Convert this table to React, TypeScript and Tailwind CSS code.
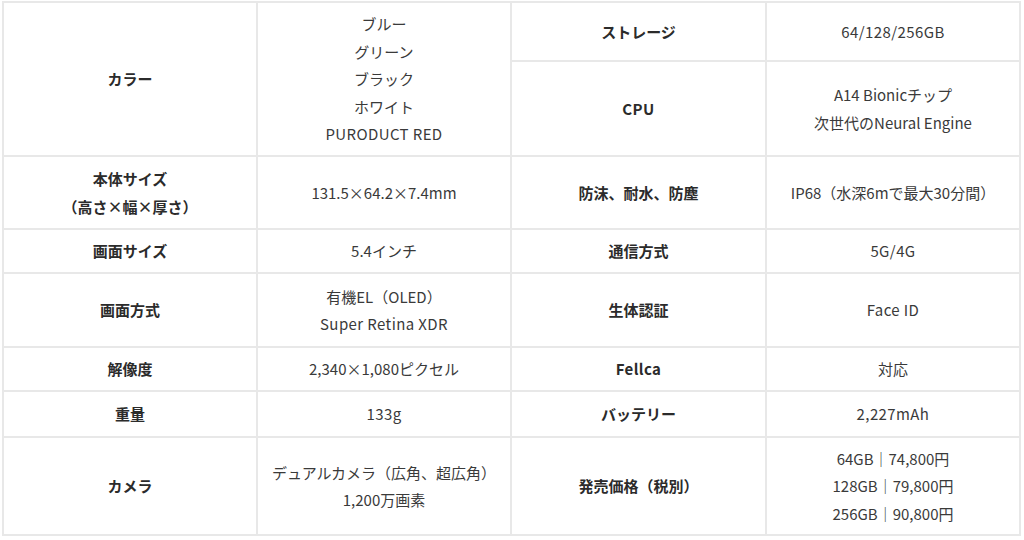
import React from "react";

type Cell = { lines: string[]; head?: boolean; rowSpan?: string };

// latin-only lines render a touch wider in the original
const isLatin = (s: string) => /^[\x20-\x7E]+$/.test(s);

function SpecCell({ lines, head, rowSpan }: Cell) {
  return (
    <div
      className={`flex flex-col items-center justify-center bg-white text-center text-[15px] leading-[27.5px] ${
        head ? "font-bold text-[#2b2b2b]" : "text-[#3a3a3a]"
      } ${rowSpan ?? ""}`}
    >
      {lines.map((l, i) => (
        <span
          key={i}
          className={`whitespace-nowrap ${isLatin(l) ? "tracking-[0.4px]" : ""}`}
        >
          {l}
        </span>
      ))}
    </div>
  );
}

export default function App() {
  return (
    <div
      className="h-[540px] w-[1024px] bg-white pt-[1px] pl-[2px]"
      style={{ fontFamily: '"Noto Sans CJK JP", "Noto Sans", sans-serif' }}
    >
      <div className="grid w-[1019px] grid-cols-[252px_252px_253px_252px] grid-rows-[57px_93px_71px_42px_72px_42px_44px_96px] gap-[2px] border-2 border-[#e8e8e8] bg-[#e8e8e8]">
        <SpecCell head lines={["カラー"]} rowSpan="row-span-2" />
        <SpecCell
          lines={["ブルー", "グリーン", "ブラック", "ホワイト", "PURODUCT RED"]}
          rowSpan="row-span-2"
        />
        <SpecCell head lines={["ストレージ"]} />
        <SpecCell lines={["64/128/256GB"]} />
        <SpecCell head lines={["CPU"]} />
        <SpecCell lines={["A14 Bionicチップ", "次世代のNeural Engine"]} />

        <SpecCell head lines={["本体サイズ", "（高さ×幅×厚さ）"]} />
        <SpecCell lines={["131.5×64.2×7.4mm"]} />
        <SpecCell head lines={["防沫、耐水、防塵"]} />
        <SpecCell lines={["IP68（水深6mで最大30分間）"]} />

        <SpecCell head lines={["画面サイズ"]} />
        <SpecCell lines={["5.4インチ"]} />
        <SpecCell head lines={["通信方式"]} />
        <SpecCell lines={["5G/4G"]} />

        <SpecCell head lines={["画面方式"]} />
        <SpecCell lines={["有機EL（OLED）", "Super Retina XDR"]} />
        <SpecCell head lines={["生体認証"]} />
        <SpecCell lines={["Face ID"]} />

        <SpecCell head lines={["解像度"]} />
        <SpecCell lines={["2,340×1,080ピクセル"]} />
        <SpecCell head lines={["Fellca"]} />
        <SpecCell lines={["対応"]} />

        <SpecCell head lines={["重量"]} />
        <SpecCell lines={["133g"]} />
        <SpecCell head lines={["バッテリー"]} />
        <SpecCell lines={["2,227mAh"]} />

        <SpecCell head lines={["カメラ"]} />
        <SpecCell lines={["デュアルカメラ（広角、超広角）", "1,200万画素"]} />
        <SpecCell head lines={["発売価格（税別）"]} />
        <SpecCell
          lines={["64GB｜74,800円", "128GB｜79,800円", "256GB｜90,800円"]}
        />
      </div>
    </div>
  );
}
